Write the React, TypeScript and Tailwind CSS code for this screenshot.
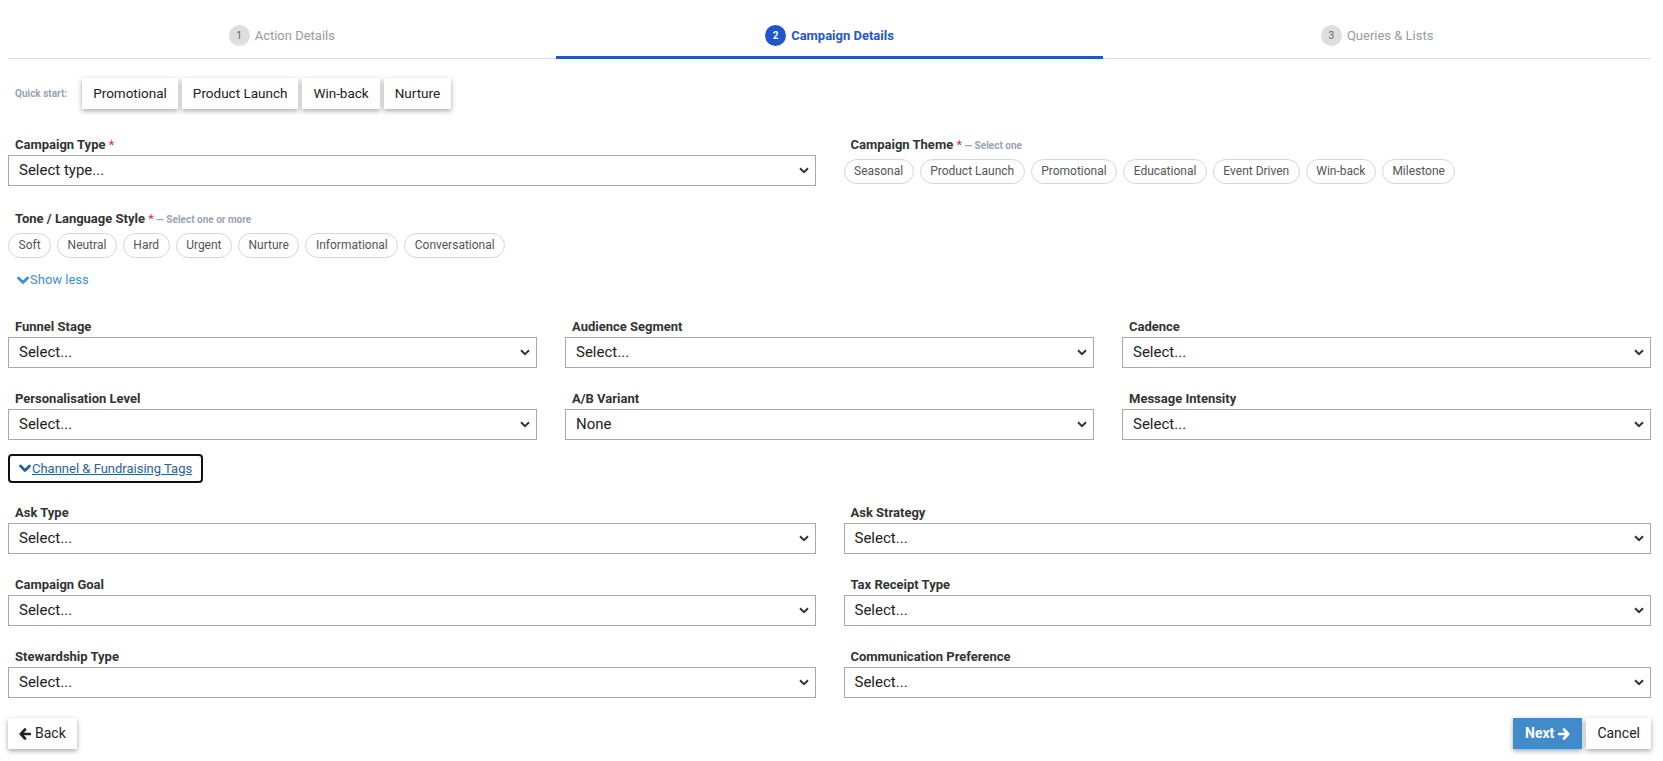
const tabs = [
  { n: 1, label: 'Action Details' },
  { n: 2, label: 'Campaign Details' },
  { n: 3, label: 'Queries & Lists' },
];

const quickStarts = ['Promotional', 'Product Launch', 'Win-back', 'Nurture'];
const themes = ['Seasonal', 'Product Launch', 'Promotional', 'Educational', 'Event Driven', 'Win-back', 'Milestone'];
const tones = ['Soft', 'Neutral', 'Hard', 'Urgent', 'Nurture', 'Informational', 'Conversational'];

function ChevronDown() {
  return (
    <svg width="12" height="9" viewBox="0 0 12 9" fill="none">
      <path d="M1.5 2L6 6.5L10.5 2" stroke="currentColor" strokeWidth="2.8" strokeLinecap="round" strokeLinejoin="round" />
    </svg>
  );
}

function Arrow({ dir }: { dir: 'left' | 'right' }) {
  return (
    <svg width="12" height="12" viewBox="0 0 12 12" fill="none" className={dir === 'right' ? 'rotate-180' : ''}>
      <path d="M6 1.5L1.8 6L6 10.5M2 6H11" stroke="currentColor" strokeWidth="2.6" strokeLinecap="round" strokeLinejoin="round" />
    </svg>
  );
}

function Label({ children, required, hint }: { children: React.ReactNode; required?: boolean; hint?: string }) {
  return (
    <div className="h-4 leading-4 pl-[7px] text-[13px] font-bold text-[#333] whitespace-nowrap">
      {children}
      {required && <span className="text-[#d9363e] font-normal"> *</span>}
      {hint && <span className="text-[10px] text-[#9aa3b1] font-bold"> — {hint}</span>}
    </div>
  );
}

function SelectBox({ value = 'Select...' }: { value?: string }) {
  return (
    <div className="mt-[2px] h-[31px] border border-[#a9a9a9] bg-white flex items-center justify-between pl-[10px] pr-[6px] text-[15px] text-[#222]">
      <span>{value}</span>
      <svg width="10" height="7" viewBox="0 0 10 7" fill="none">
        <path d="M1 1.2L5 5.2L9 1.2" stroke="#333" strokeWidth="2" />
      </svg>
    </div>
  );
}

function Field({ label, value }: { label: string; value?: string }) {
  return (
    <div>
      <Label>{label}</Label>
      <SelectBox value={value} />
    </div>
  );
}

function Chips({ items }: { items: string[] }) {
  return (
    <div className="mt-[6px] flex flex-wrap gap-[6px]">
      {items.map((t) => (
        <span
          key={t}
          className="h-[25px] px-[9.5px] rounded-full border border-[#d6d6d6] bg-white text-[12px] leading-[23px] text-[#555]"
        >
          {t}
        </span>
      ))}
    </div>
  );
}

export default function App() {
  return (
    <div className="min-h-screen bg-white pl-2 pr-3 text-[#222]" style={{ fontFamily: 'Roboto, "Noto Sans", sans-serif' }}>
      {/* stepper */}
      <div className="flex border-b border-[#dedede]">
        {tabs.map((t) => {
          const active = t.n === 2;
          return (
            <div
              key={t.n}
              className={
                active
                  ? 'flex-1 h-[59px] -mb-px pt-[15px] flex items-center justify-center gap-[5px] border-b-[3px] border-[#1f56cf]'
                  : 'flex-1 h-[59px] -mb-px pt-[15px] flex items-center justify-center gap-[5px] border-b-[3px] border-transparent'
              }
            >
              <span
                className={
                  active
                    ? 'w-[21px] h-[21px] rounded-full bg-[#1f56cf] text-white text-[10px] font-bold flex items-center justify-center'
                    : 'w-[21px] h-[21px] rounded-full bg-[#dedede] text-[#666] text-[10px] flex items-center justify-center'
                }
              >
                {t.n}
              </span>
              <span className={active ? 'text-[13px] font-bold text-[#2457c9]' : 'text-[13px] text-[#9a9a9a]'}>{t.label}</span>
            </div>
          );
        })}
      </div>

      {/* quick start */}
      <div className="mt-[19px] flex items-center">
        <span className="pl-[7px] mr-[15px] text-[10px] font-bold text-[#9aa3b1]">Quick start:</span>
        <div className="flex gap-[4px]">
          {quickStarts.map((q) => (
            <button
              key={q}
              className="h-[31px] px-[11px] bg-white text-[13.5px] text-[#222] shadow-[0_2px_5px_rgba(0,0,0,0.35)]"
            >
              {q}
            </button>
          ))}
        </div>
      </div>

      {/* type + theme */}
      <div className="mt-[28px] grid grid-cols-2 gap-x-7">
        <div>
          <Label required>Campaign Type</Label>
          <SelectBox value="Select type..." />
        </div>
        <div>
          <Label required hint="Select one">
            Campaign Theme
          </Label>
          <Chips items={themes} />
        </div>
      </div>

      {/* tone */}
      <div className="mt-[25px]">
        <Label required hint="Select one or more">
          Tone / Language Style
        </Label>
        <Chips items={tones} />
      </div>

      <div className="mt-[13px] h-[18px] pl-[9px] flex items-center gap-[1px] text-[13px] text-[#3d8fd6]">
        <ChevronDown />
        <span>Show less</span>
      </div>

      {/* detail fields */}
      <div className="mt-[30px] grid grid-cols-3 gap-x-7 gap-y-[23px]">
        <Field label="Funnel Stage" />
        <Field label="Audience Segment" />
        <Field label="Cadence" />
        <Field label="Personalisation Level" />
        <Field label="A/B Variant" value="None" />
        <Field label="Message Intensity" />
      </div>

      <button className="mt-[14px] h-[29px] px-[9px] flex items-center gap-[1px] border-2 border-[#111] rounded-[4px] text-[13px] text-[#2a6296]">
        <ChevronDown />
        <span className="underline">Channel &amp; Fundraising Tags</span>
      </button>

      <div className="mt-[22px] grid grid-cols-2 gap-x-7 gap-y-[23px]">
        <Field label="Ask Type" />
        <Field label="Ask Strategy" />
        <Field label="Campaign Goal" />
        <Field label="Tax Receipt Type" />
        <Field label="Stewardship Type" />
        <Field label="Communication Preference" />
      </div>

      {/* footer */}
      <div className="mt-[20px] flex items-center justify-between">
        <button className="h-[31px] px-[11px] flex items-center gap-[4px] bg-white text-[14px] text-[#222] shadow-[0_2px_5px_rgba(0,0,0,0.35)]">
          <Arrow dir="left" />
          <span>Back</span>
        </button>
        <div className="flex gap-[4px]">
          <button className="h-[31px] px-[12px] flex items-center gap-[4px] bg-[#428bca] text-[14px] font-bold text-white shadow-[0_2px_5px_rgba(0,0,0,0.35)]">
            <span>Next</span>
            <Arrow dir="right" />
          </button>
          <button className="h-[31px] px-[11px] bg-white text-[14px] text-[#222] shadow-[0_2px_5px_rgba(0,0,0,0.35)]">
            Cancel
          </button>
        </div>
      </div>
    </div>
  );
}
